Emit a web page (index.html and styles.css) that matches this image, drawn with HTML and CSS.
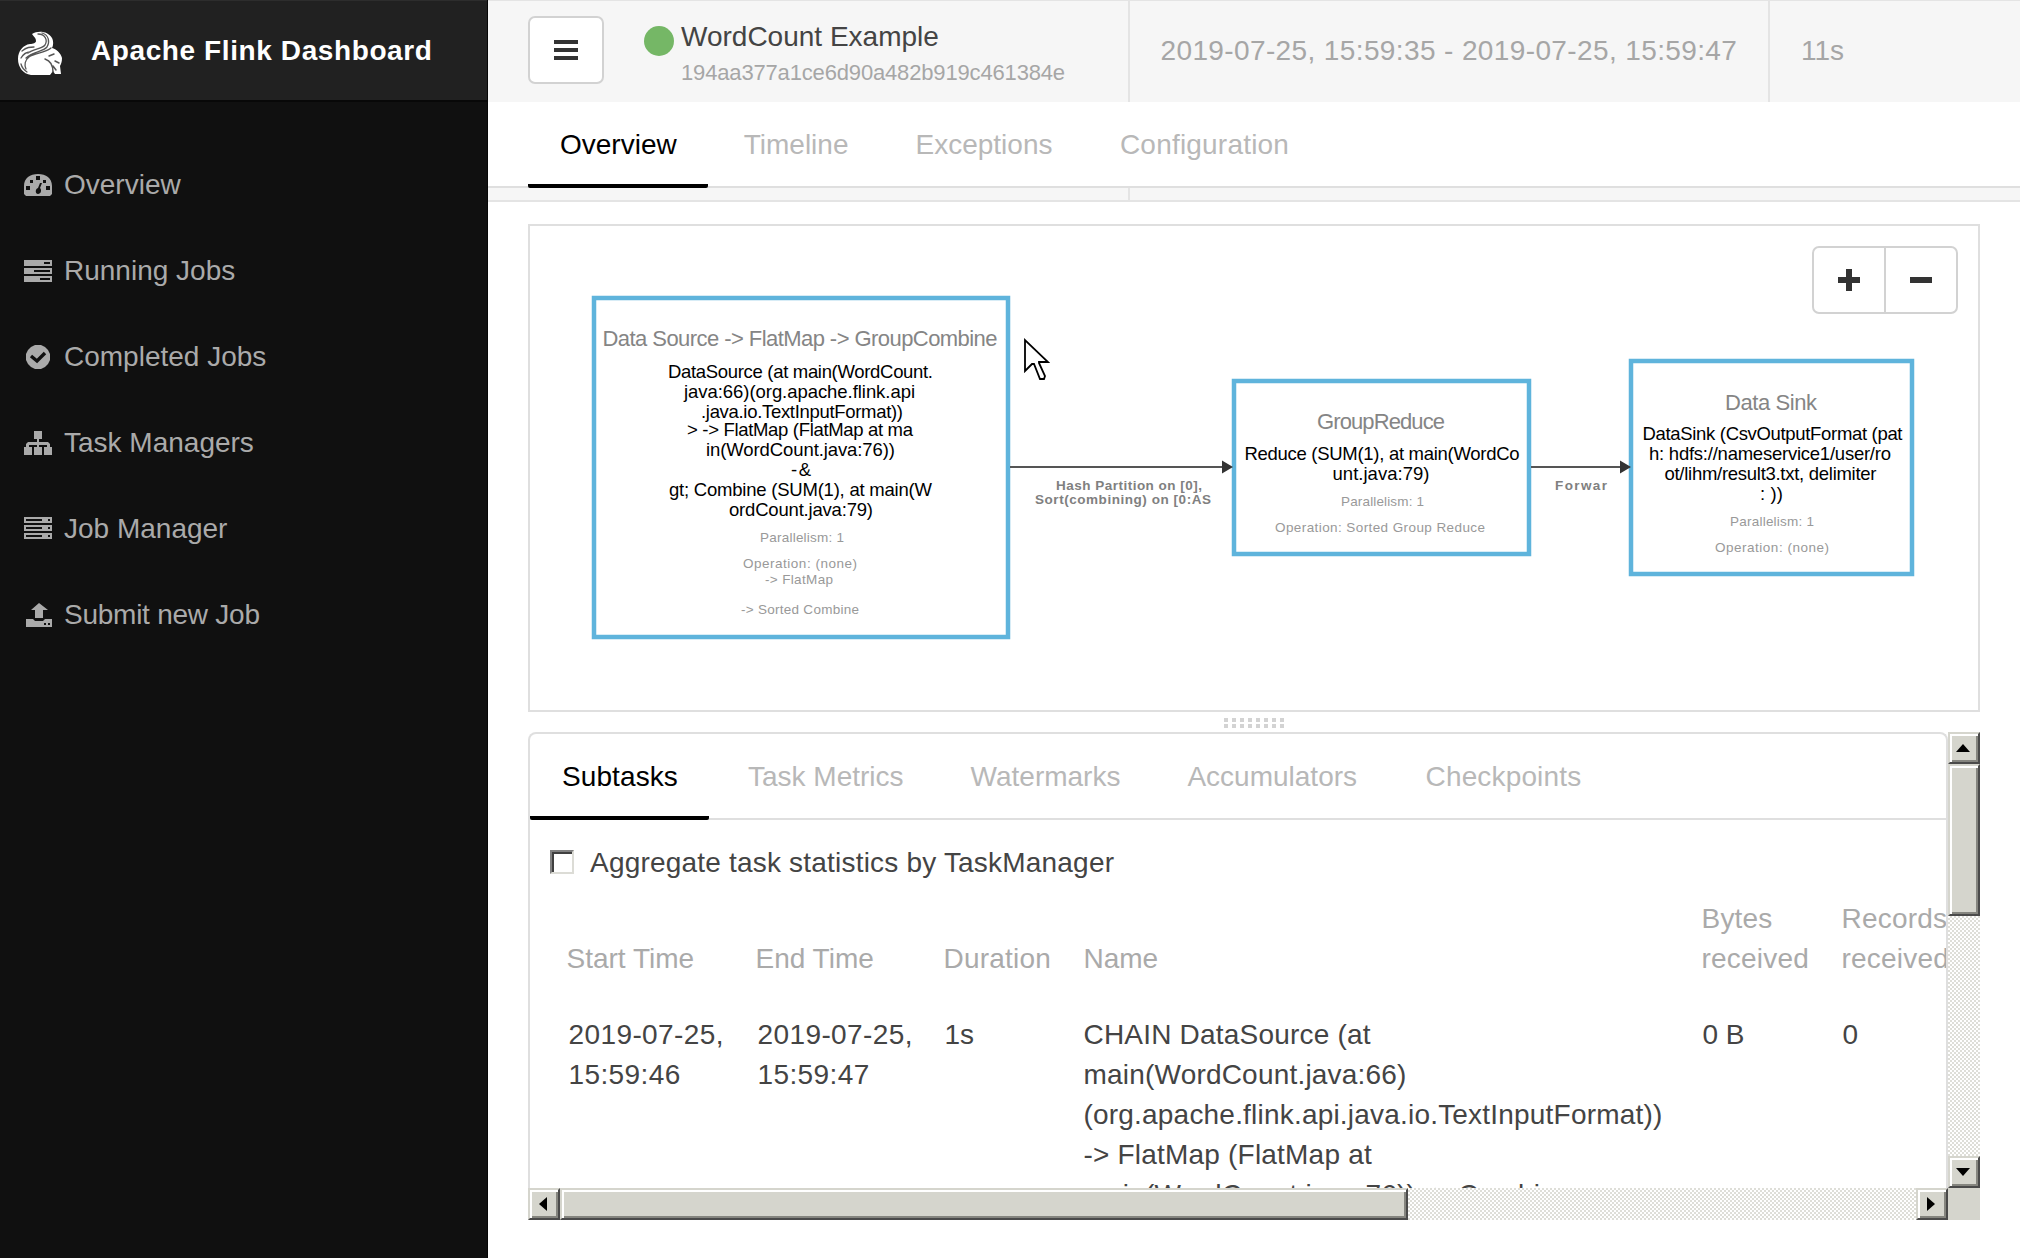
FILE: index.html
```html
<!DOCTYPE html>
<html lang="en">
<head>
<meta charset="utf-8">
<title>Apache Flink Dashboard</title>
<link rel="stylesheet" href="styles.css">
</head>
<body>
<div class="app">
  <aside class="sidebar">
    <div class="brand">
      <svg class="brand-logo" viewBox="0 0 44 44">
        <path fill="#fff" d="M14 3C20-1 30 0 34 7c2 4 1 8 0 10 4 1 9 5 10 10 0 4-1 6-2 8l1 8h-6l-2-3-3 4H13C5 43 0 36 0 28c0-8 5-14 12-15 3 0 6-1 6-3 0-3-2-4-4-7z"/>
        <g fill="none" stroke="#555" stroke-linecap="round">
          <path stroke-width="1.3" d="M20 3c7 0 10 6 7 11-3 4-12 4-17 8M24 2c7 2 8 9 5 14-4 5-14 4-21 11M33 17c-6 5-16 5-22 9-4 3-5 8-3 12M4 20c5-4 8-4 12-4M3 27c3-5 6-6 9-6M3 33c1 4 3 6 6 8"/>
          <path stroke-width="1.5" d="M27 28c6 2 8 8 8 13M31 25l5-2M37 30l4 2M35 35l3 4"/>
        </g>
        <path fill="#fff" d="M13 43c0-9 4-14 10-14s9 5 10 14z"/>
      </svg>
      <span class="brand-name">Apache Flink Dashboard</span>
    </div>
    <nav class="menu">
      <a class="menu-item"><svg class="menu-icon" viewBox="0 0 28 26"><path fill="#aaa" fill-rule="evenodd" d="M0 14C0 6 6 2 14 2s14 4 14 12v8l-2 2H2l-2-2zM12 4v4h4V4zM6 8v3h3V8zM19 8v3h3V8zM2 14v4h4v-4zM22 14v4h4v-4zM16 11l-2 5c-3 1-3 6 0 6s4-4 2-6l2-5z"/></svg>Overview</a>
      <a class="menu-item"><svg class="menu-icon" viewBox="0 0 28 26"><path fill="#aaa" fill-rule="evenodd" d="M0 2h28v6H0zM20 4v2h6V4zM0 10h28v6H0zM10 12v2h16v-2zM0 18h28v6H0zM16 20v2h10v-2z"/></svg>Running Jobs</a>
      <a class="menu-item"><svg class="menu-icon" viewBox="0 0 28 26"><path fill="#aaa" d="M11 1h6l4 2 3 3 2 4v6l-2 4-3 3-4 2h-6l-4-2-3-3-2-4v-6l2-4 3-3z"/><path fill="none" stroke="#101010" stroke-width="3.4" d="M7 12l6 5 8-8"/></svg>Completed Jobs</a>
      <a class="menu-item"><svg class="menu-icon" viewBox="0 0 28 26"><path fill="#aaa" d="M10 1h8v8h-3v3h9l2 2v3h2v8h-8v-8h3v-2h-8v2h3v8h-8v-8h3v-2H5v2h3v8H0v-8h2v-3l2-2h9V9h-3z"/></svg>Task Managers</a>
      <a class="menu-item"><svg class="menu-icon" viewBox="0 0 28 26"><path fill="#aaa" fill-rule="evenodd" d="M0 1h28v6H0zM2 3v2h16V3zM24 3v2h2V3zM0 9h28v6H0zM2 11v2h16v-2zM24 11v2h2v-2zM0 17h28v6H0zM2 19v2h16v-2zM24 19v2h2v-2z"/></svg>Job Manager</a>
      <a class="menu-item submit"><svg class="menu-icon" viewBox="0 0 28 26"><path fill="#aaa" fill-rule="evenodd" d="M15 1l9 7h-5v8h-8V8H7zM2 17h7l2 2h8l2-2h7v8H2zM20 21v2h2v-2zM24 21v2h2v-2z"/></svg>Submit new Job</a>
    </nav>
  </aside>

  <main class="main">
    <header class="topbar">
      <div class="topbar-job">
        <button class="toggle"><svg width="24" height="20"><path fill="#333" d="M0 0h24v4H0zM0 8h24v4H0zM0 16h24v4H0z"/></svg></button>
        <span class="status"></span>
        <div class="job">
          <div class="job-name">WordCount Example</div>
          <div class="job-id">194aa377a1ce6d90a482b919c461384e</div>
        </div>
      </div>
      <div class="topbar-dates">2019-07-25, 15:59:35 - 2019-07-25, 15:59:47</div>
      <div class="topbar-time">11s</div>
    </header>
    <nav class="tabs page-tabs">
      <a class="tab active">Overview</a><a class="tab">Timeline</a><a class="tab">Exceptions</a><a class="tab wide">Configuration</a>
    </nav>
    <div class="strip"><div class="strip-cell"></div></div>

    <section class="graph">
      <svg class="graph-canvas" width="1448" height="484" viewBox="530 226 1448 484">
        <g class="box">
          <rect x="594" y="298" width="414" height="339"/>
          <rect x="1234" y="381" width="295" height="173"/>
          <rect x="1631" y="361" width="281" height="213"/>
        </g>
        <g class="edge">
          <path d="M1010 467h213M1531 467h90"/>
        </g>
        <path fill="#333" d="M1222 460.500l11 6.500-11 6.500zM1620 460.500l11 6.500-11 6.500z"/>
        <g class="node-title">
          <text x="602.500" y="346" textLength="395">Data Source -&gt; FlatMap -&gt; GroupCombine</text>
          <text x="1317" y="429" textLength="128">GroupReduce</text>
          <text x="1725" y="410" textLength="92">Data Sink</text>
        </g>
        <g class="node-text">
          <text x="668" y="378" textLength="265">DataSource (at main(WordCount.</text>
          <text x="684" y="398" textLength="231">java:66)(org.apache.flink.api</text>
          <text x="701" y="418" textLength="202">.java.io.TextInputFormat))</text>
          <text x="687" y="436" textLength="226">&gt; -&gt; FlatMap (FlatMap at ma</text>
          <text x="706" y="456" textLength="189">in(WordCount.java:76))</text>
          <text x="791" y="476" textLength="20">-&amp;</text>
          <text x="669" y="496" textLength="263">gt; Combine (SUM(1), at main(W</text>
          <text x="729" y="516" textLength="144">ordCount.java:79)</text>
          <text x="1244.500" y="460" textLength="275">Reduce (SUM(1), at main(WordCo</text>
          <text x="1332.500" y="480" textLength="97">unt.java:79)</text>
          <text x="1642.500" y="440" textLength="260">DataSink (CsvOutputFormat (pat</text>
          <text x="1649" y="460" textLength="242">h: hdfs://nameservice1/user/ro</text>
          <text x="1664.500" y="480" textLength="212">ot/lihm/result3.txt, delimiter</text>
          <text x="1760" y="500" textLength="23">: ))</text>
        </g>
        <g class="node-meta">
          <text x="760" y="542" textLength="84">Parallelism: 1</text>
          <text x="743" y="568" textLength="114">Operation: (none)</text>
          <text x="765" y="584" textLength="68">-&gt; FlatMap</text>
          <text x="741" y="614" textLength="118">-&gt; Sorted Combine</text>
          <text x="1341" y="506" textLength="83">Parallelism: 1</text>
          <text x="1275" y="532" textLength="210">Operation: Sorted Group Reduce</text>
          <text x="1730" y="526" textLength="84">Parallelism: 1</text>
          <text x="1715" y="552" textLength="114">Operation: (none)</text>
        </g>
        <g class="edge-label">
          <text x="1056" y="490" textLength="146">Hash Partition on [0],</text>
          <text x="1035" y="504" textLength="176">Sort(combining) on [0:AS</text>
          <text x="1555" y="490" textLength="52">Forwar</text>
        </g>
        <path fill="#fff" stroke="#000" stroke-width="1.8" d="M1025 340v31l7-7h2l6 15h4l1-3-6-13v-1h9z"/>
      </svg>
      <div class="zoom">
        <button class="zoom-btn"><svg width="22" height="22"><path fill="#333" d="M8 0h6v8h8v6h-8v8H8v-8H0V8h8z"/></svg></button>
        <button class="zoom-btn"><svg width="22" height="22"><path fill="#333" d="M0 8h22v6H0z"/></svg></button>
      </div>
    </section>

    <div class="grip"></div>

    <section class="detail">
      <div class="panel">
        <nav class="tabs panel-tabs">
          <a class="tab active">Subtasks</a><a class="tab">Task Metrics</a><a class="tab">Watermarks</a><a class="tab">Accumulators</a><a class="tab wide">Checkpoints</a>
        </nav>
        <label class="aggregate"><span class="check"></span><span class="aggregate-text">Aggregate task statistics by TaskManager</span></label>
        <div class="row head">
          <div>Start Time</div><div>End Time</div><div class="name">Duration</div><div>Name</div><div class="name">Bytes<br>received</div><div class="name">Records<br>received</div>
        </div>
        <div class="row">
          <div class="date">2019-07-25,<br>15:59:46</div><div class="date">2019-07-25,<br>15:59:47</div><div class="num">1s</div>
          <div class="name">CHAIN DataSource (at<br>main(WordCount.java:66)<br>(org.apache.flink.api.java.io.TextInputFormat))<br>-&gt; FlatMap (FlatMap at<br>main(WordCount.java:76)) -&gt; Combine</div>
          <div class="num">0 B</div><div class="num">0</div>
        </div>
      </div>
      <div class="vbar">
        <div class="sb-btn"><svg width="14" height="8"><path d="M7 0l7 8H0z"/></svg></div>
        <div class="sb-thumb-v"></div>
        <div class="sb-space"></div>
        <div class="sb-btn"><svg width="14" height="8"><path d="M0 0h14L7 8z"/></svg></div>
      </div>
      <div class="hbar">
        <div class="sb-btn"><svg width="8" height="14"><path d="M0 7l8-7v14z"/></svg></div>
        <div class="sb-thumb-h"></div>
        <div class="sb-space"></div>
        <div class="sb-btn"><svg width="8" height="14"><path d="M0 0l8 7-8 7z"/></svg></div>
      </div>
      <div class="corner"></div>
    </section>
  </main>
</div>
</body>
</html>
```

FILE: styles.css
```css
* { box-sizing: border-box; }
body {
  margin: 0;
  background: #fff;
  color: #444;
  font: 28px/40px "Liberation Sans", Arial, sans-serif;
}
svg { display: block; }
button { padding: 0; font: inherit; }
.app { display: flex; width: 2020px; height: 1258px; overflow: hidden; }

.sidebar { flex: none; width: 488px; background: #101010; border-right: 1px solid #060606; }
.brand {
  display: flex;
  align-items: center;
  height: 102px;
  padding: 0 0 0 18px;
  background: #212121;
  border-top: 1px solid #2d2d2d;
  border-bottom: 2px solid #080808;
}
.brand-logo { width: 44px; height: 44px; margin: 4px 29px 0 0; }
.brand-name { color: #fff; font-weight: bold; letter-spacing: .6px; }
.menu { padding-top: 40px; }
.menu-item { display: flex; align-items: center; height: 86px; padding-left: 24px; color: #aaa; }
.menu-item.submit { letter-spacing: -.25px; }
.menu-icon { width: 28px; height: 26px; margin-right: 12px; }

.main { display: flex; flex-direction: column; flex: 1; }
.topbar { display: flex; height: 102px; background: #f6f6f6; border-top: 1px solid #e4e4e4; }
.topbar-job { display: flex; width: 642px; padding: 15px 0 0 40px; border-right: 2px solid #e4e4e4; }
.toggle, .zoom-btn { display: flex; align-items: center; justify-content: center; border: 2px solid #d2d2d2; background: #fff; }
.toggle { width: 76px; height: 68px; border-radius: 7px; }
.status { width: 30px; height: 30px; margin: 10px 7px 0 40px; border-radius: 50%; background: #75b766; }
.job { padding-top: 1px; }
.job-id { color: #a6a6a6; font-size: 22px; line-height: 32px; letter-spacing: -.16px; }
.topbar-dates { width: 640px; padding-left: 30.500px; border-right: 2px solid #e4e4e4; color: #a6a6a6; line-height: 100px; letter-spacing: .38px; }
.topbar-time { padding-left: 31px; color: #a6a6a6; line-height: 100px; }

.tabs { display: flex; flex: none; gap: 4px; height: 86px; border-bottom: 2px solid #dfdfdf; line-height: 86px; }
.page-tabs { padding-left: 40px; }
.tab { height: 86px; padding: 0 31.500px; color: #b8b8b8; white-space: nowrap; }
.tab.active { padding-left: 32px; color: #000; border-bottom: 4px solid #000; border-radius: 2px; }
.tab.wide { padding-left: 32px; letter-spacing: .2px; }
.panel-tabs .tab { letter-spacing: 0; }
.panel-tabs .tab.active { margin-right: 3px; letter-spacing: .1px; }
.panel-tabs .tab.wide { padding-left: 33px; letter-spacing: .15px; }
.strip { height: 14px; background: #f6f6f6; border-bottom: 2px solid #e4e4e4; }
.strip-cell { width: 642px; height: 12px; border-right: 2px solid #e4e4e4; }

.graph { position: relative; flex: none; width: 1452px; height: 488px; margin: 22px 0 0 40px; border: 2px solid #dfdfdf; }
.box { fill: #fff; stroke: #5fb4dc; stroke-width: 4.500px; }
.edge { fill: none; stroke: #555; stroke-width: 2px; }
.node-title { font-size: 22px; fill: #858585; }
.node-text { font-size: 18.500px; fill: #000; }
.node-meta { font-size: 13.500px; fill: #999; }
.edge-label { font-size: 13.500px; font-weight: bold; fill: #808080; }
.zoom { position: absolute; top: 20px; right: 20px; display: flex; }
.zoom-btn { width: 74px; height: 68px; }
.zoom-btn:first-child { border-radius: 7px 0 0 7px; }
.zoom-btn:last-child { margin-left: -2px; border-radius: 0 7px 7px 0; }

.grip {
  width: 60px;
  height: 10px;
  margin: 6px 0 4px 736px;
  background:
    linear-gradient(#fff, #fff) 0 4px / 60px 2px no-repeat,
    repeating-linear-gradient(90deg, #d3d3d3 0 4px, #fff 4px 8px);
}

.detail { display: grid; grid-template: 456px 32px / 1420px 32px; width: 1452px; margin-left: 40px; }
.panel { overflow: hidden; border: 2px solid #dfdfdf; border-bottom: 0; border-radius: 8px 8px 0 0; }
.aggregate { display: flex; align-items: center; height: 40px; margin: 22px 0 17px; padding-left: 20px; }
.aggregate-text { padding-top: 2px; letter-spacing: .2px; }
.check {
  width: 24px;
  height: 24px;
  margin-right: 16px;
  border: 2px solid;
  border-color: #808080 #dcdcd6 #dcdcd6 #808080;
  box-shadow: inset 2px 2px #404040;
}
.row { display: grid; grid-template-columns: 189px 188px 140px 618px 140px 140px; padding-left: 36.500px; white-space: nowrap; }
.head { align-items: end; margin-bottom: 36px; color: #aaa; }
.date { padding-left: 2px; letter-spacing: .4px; }
.name { letter-spacing: .2px; }
.num { padding-left: 1px; }

.vbar, .hbar { display: flex; background: repeating-conic-gradient(#deded8 0 25%, #fff 0 50%) 0 0 / 4px 4px; }
.vbar { flex-direction: column; }
.sb-btn, .sb-thumb-v, .sb-thumb-h {
  background: #d5d5cd;
  border: 2px solid;
  border-color: #d5d5cd #4a4a4a #4a4a4a #d5d5cd;
  box-shadow: inset 2px 2px #fff, inset -2px -2px #85857f;
}
.sb-btn { display: flex; align-items: center; justify-content: center; width: 32px; height: 32px; padding-right: 2px; }
.sb-thumb-v { height: 152px; }
.sb-thumb-h { width: 848px; }
.sb-space { flex: 1; }
.corner { background: #d5d5cd; }
```
